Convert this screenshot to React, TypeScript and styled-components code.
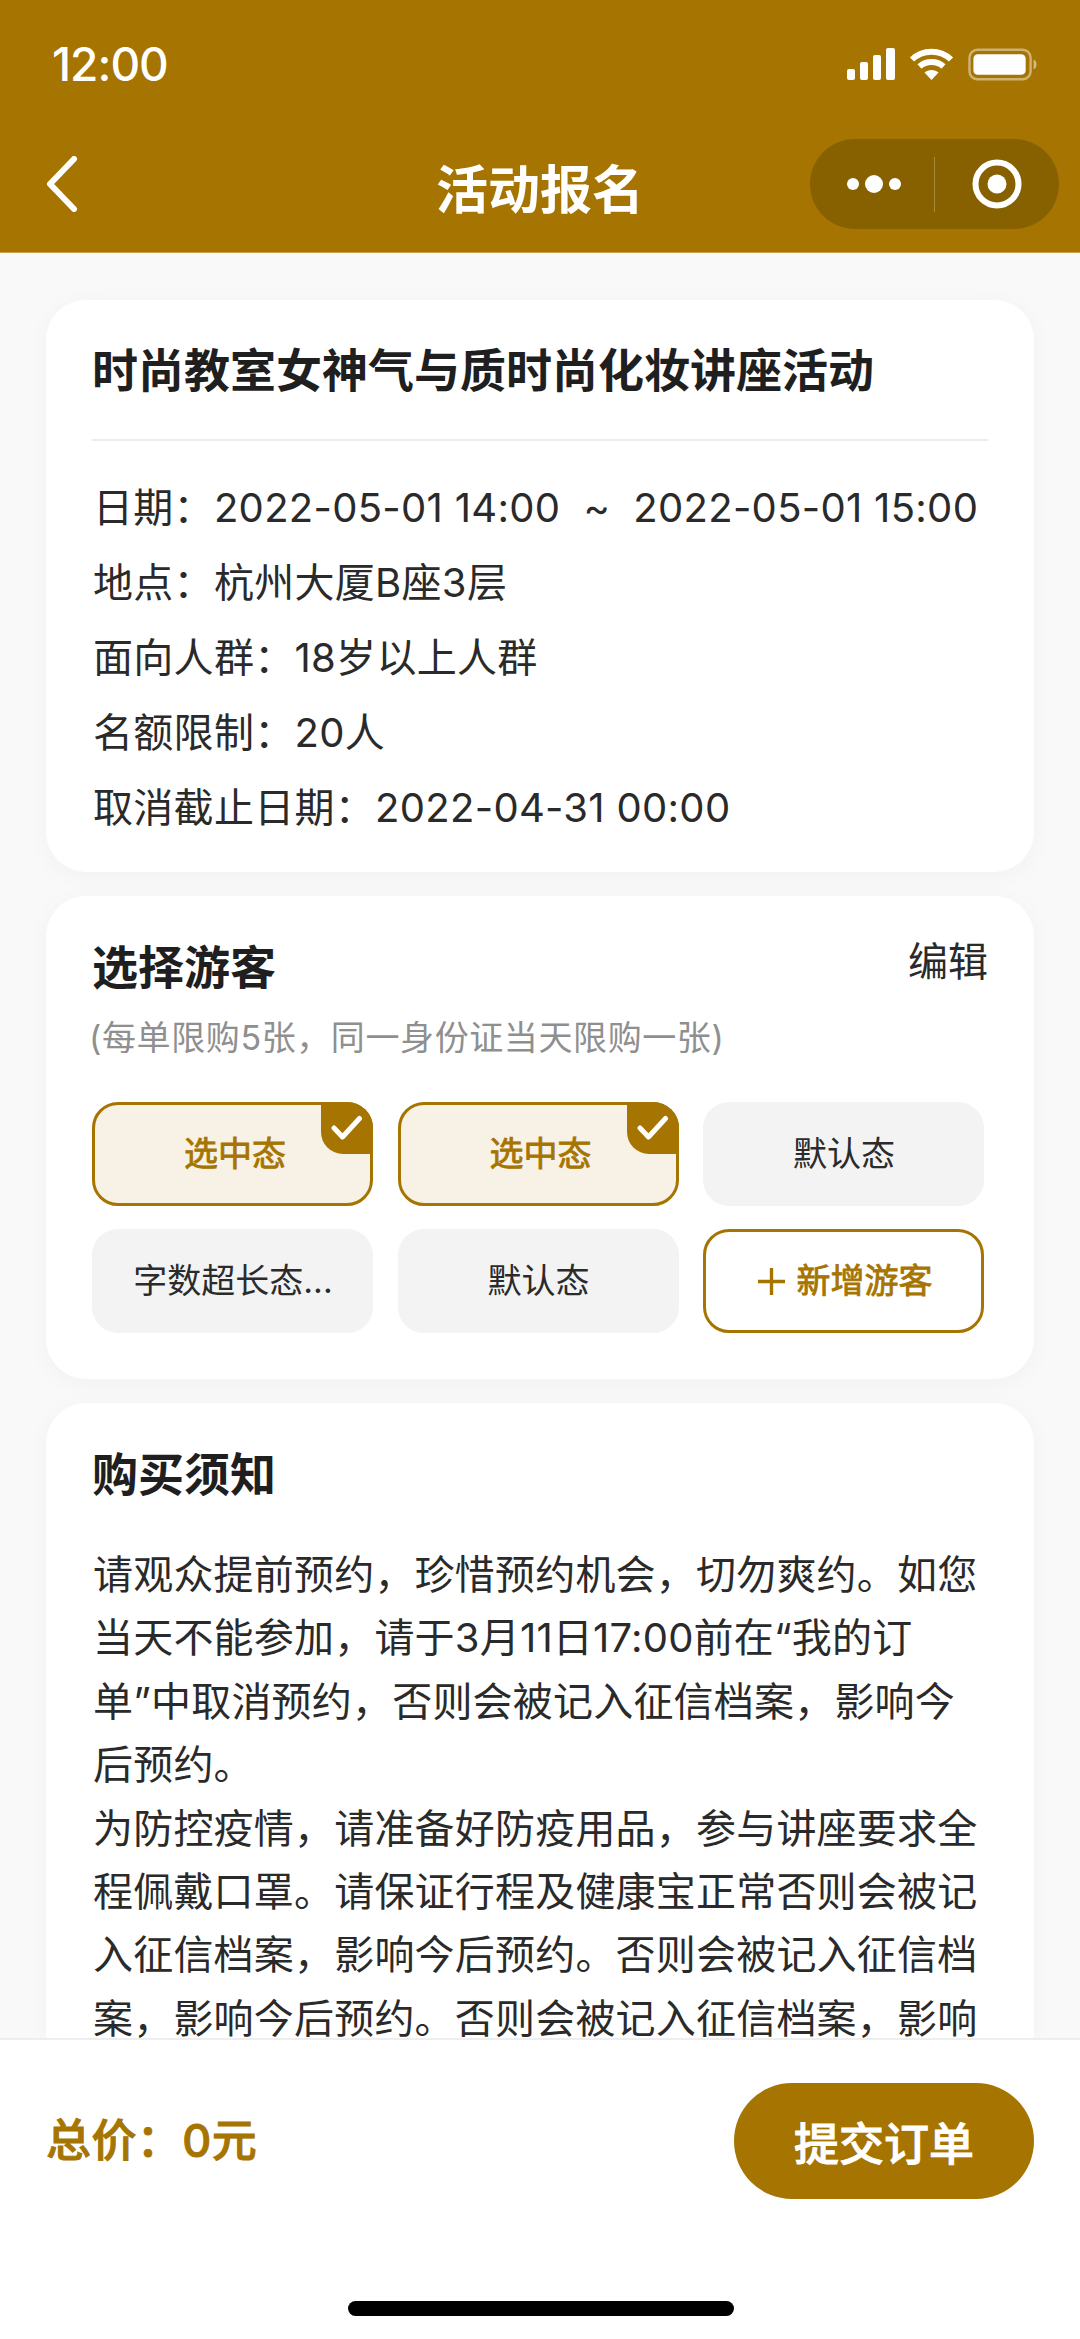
import React from 'react';
import styled, { createGlobalStyle } from 'styled-components';

const Global = createGlobalStyle`
  html, body { margin: 0; padding: 0; background: #f9f9f9; }
  * { box-sizing: border-box; }
`;
const gold = '#a67400';
const Page = styled.div`
  width: 1080px; height: 2339px; display: flex; flex-direction: column; overflow: hidden;
  background: #f9f9f9; color: #1f1f1f;
  font-family: "Inter", "Noto Sans CJK SC", sans-serif;
`;
const Header = styled.header`
  height: 253px; flex: none; background: ${gold}; color: #fff; display: flex; flex-direction: column;
  border-bottom: 1px solid #c9a445;
`;
const StatusBar = styled.div`
  height: 128px; padding: 40px 43px 0 52px; display: flex; justify-content: space-between; align-items: flex-start;
`;
const Time = styled.span`
  font-size: 46px; line-height: 48px; font-weight: 500; letter-spacing: -1px;
`;
const StatusIcons = styled.div`
  display: flex; align-items: center; gap: 14px; height: 44px; margin-top: 2px;
`;
const NavBar = styled.div`
  display: flex; align-items: center; justify-content: space-between; height: 90px; margin-top: 11px; padding: 0 21px 0 46px; position: relative;
`;
const Title = styled.h1`
  position: absolute; left: 0; right: 0; top: 3px; margin: 0; text-align: center;
  font-size: 52px; line-height: 90px; font-weight: 700; font-family: "Noto Sans CJK SC", serif;
`;
const Capsule = styled.div`
  width: 249px; height: 90px; border-radius: 45px; background: #876000; display: flex; align-items: center; padding-left: 37px;
`;
const CapsuleDivider = styled.span`
  width: 1px; height: 55px; background: #a78a3f; margin: 0 37px 0 33px;
`;
const Content = styled.main`
  flex: 1; min-height: 0; overflow: hidden; padding: 47px 46px 0; display: flex; flex-direction: column; gap: 24px;
`;
const Card = styled.section<{ $fill?: boolean }>`
  flex: ${p => (p.$fill ? '1' : 'none')}; min-height: 0; background: #fff; padding: 0 46px; box-shadow: 0 4px 24px rgba(0,0,0,.035);
  border-radius: ${p => (p.$fill ? '40px 40px 0 0' : '40px')};
`;
const EventTitle = styled.h2`
  margin: 0; padding-top: 38px; height: 141px; border-bottom: 2px solid #ececec; font-size: 46px; line-height: 64px; font-weight: 700; color: #1f1f1f; white-space: nowrap;
`;
const InfoList = styled.div`
  padding: 29px 0 27px 1px; display: flex; flex-direction: column;
`;
const InfoRow = styled.div`
  font-size: 40px; line-height: 75px; white-space: pre; color: #2a2a2a; letter-spacing: .3px;
`;
const SectionHead = styled.div`
  display: flex; justify-content: space-between; align-items: flex-start; padding-top: 40px;
`;
const SectionTitle = styled.h3`
  margin: 0; font-size: 46px; line-height: 62px; font-weight: 700; color: #1f1f1f;
`;
const EditLink = styled.span`
  font-size: 40px; line-height: 52px; color: #2a2a2a;
`;
const Note = styled.p`
  margin: 18px 0 0 -3px; font-size: 34px; line-height: 44px; color: #8f8f8f; white-space: nowrap; letter-spacing: .6px;
`;
const ChipGrid = styled.div`
  display: grid; grid-template-columns: repeat(3, 281px); column-gap: 24.5px; row-gap: 23px; margin: 42px 0 46px;
`;
const Chip = styled.div<{ $variant?: 'selected' | 'default' | 'add' }>`
  position: relative; height: 104px; border-radius: 26px; display: flex; align-items: center; justify-content: center;
  font-size: 34px; white-space: nowrap; line-height: 46px;
  padding-left: ${p => (p.$variant === 'selected' ? '5px' : '1px')};
  color: ${p => (p.$variant === 'default' ? '#2b2b2b' : gold)};
  background: ${p => (p.$variant === 'selected' ? '#f8f1e5' : p.$variant === 'add' ? '#fff' : '#f3f3f3')};
  border: ${p => (p.$variant === 'default' ? 'none' : `3px solid ${gold}`)};
  -webkit-text-stroke: ${p => (p.$variant === 'default' ? '0' : `.8px ${gold}`)};
`;
const CheckCorner = styled.span`
  position: absolute; top: -3px; right: -3px; width: 52px; height: 52px; background: ${gold};
  border-bottom-left-radius: 22px; border-top-right-radius: 26px;
  display: flex; align-items: center; justify-content: center;
`;
const AddLabel = styled.span`
  display: flex; align-items: center; gap: 12px; padding-left: 2px;
`;
const NoticeTitle = styled(SectionTitle)`
  padding-top: 40px;
`;
const NoticeBody = styled.p`
  margin: 38px 0 0 1px; font-size: 40px; line-height: 63.4px; color: #2a2a2a; letter-spacing: .2px;
`;
const Footer = styled.footer`
  position: relative; flex: none; height: 301px; background: #fff; border-top: 2px solid #eee; padding: 43px 46px 0 46px;
  display: flex; align-items: flex-start; justify-content: space-between;
`;
const Total = styled.span`
  font-size: 45px; line-height: 116px; font-weight: 500; color: ${gold}; letter-spacing: .4px; -webkit-text-stroke: .9px ${gold};
`;
const Submit = styled.button`
  width: 300px; height: 116px; border: 0; border-radius: 58px; background: ${gold}; color: #fff; font: inherit; font-size: 45px; font-weight: 500; padding: 0; -webkit-text-stroke: .9px #fff;
`;
const HomeBar = styled.span`
  position: absolute; left: 348px; bottom: 23px; width: 386px; height: 15px; border-radius: 8px; background: #000;
`;

const Signal = () => (
  <svg width="48" height="32" viewBox="0 0 48 32" fill="#fff">
    <rect x="0" y="21" width="8" height="11" rx="2" />
    <rect x="13" y="14" width="8" height="18" rx="2" />
    <rect x="26" y="7" width="8" height="25" rx="2" />
    <rect x="39" y="0" width="9" height="32" rx="2" />
  </svg>
);
const Wifi = () => (
  <svg width="45" height="32" viewBox="0 0 45 32" fill="none" stroke="#fff" strokeWidth="6">
    <path d="M3 11.5C13.5 1 31.5 1 42 11.5" />
    <path d="M10.5 18.5C17 12.5 28 12.5 34.5 18.5" />
    <path d="M22.5 32L15.5 24.5C19 21 26 21 29.5 24.5Z" fill="#fff" stroke="none" />
  </svg>
);
const Battery = () => (
  <svg width="69" height="33" viewBox="0 0 70 33" fill="none">
    <rect x="1.5" y="1.5" width="62" height="30" rx="8" stroke="#fff" strokeOpacity=".45" strokeWidth="2.5" />
    <rect x="5.5" y="6" width="53" height="21" rx="4.5" fill="#fff" />
    <path d="M66.5 11.5C69 12.5 69.5 14.5 69.5 16.5S69 20.5 66.5 21.5Z" fill="#fff" fillOpacity=".5" />
  </svg>
);
const Back = () => (
  <svg width="32" height="56" viewBox="0 0 32 56" fill="none" stroke="#fff" strokeWidth="6" strokeLinecap="round" strokeLinejoin="round">
    <path d="M28 3L4 28L28 53" />
  </svg>
);
const Dots = () => (
  <svg width="54" height="20" viewBox="0 0 54 20" fill="#fff">
    <circle cx="6" cy="10" r="6" />
    <circle cx="27" cy="10" r="9" />
    <circle cx="48" cy="10" r="6" />
  </svg>
);
const Target = () => (
  <svg width="50" height="50" viewBox="0 0 50 50" fill="none">
    <circle cx="25" cy="25" r="21.5" stroke="#fff" strokeWidth="6" />
    <circle cx="25" cy="25" r="9.5" fill="#fff" />
  </svg>
);
const Check = () => (
  <svg width="32" height="26" viewBox="0 0 32 26" fill="none" stroke="#fff" strokeWidth="5" strokeLinecap="round" strokeLinejoin="round">
    <path d="M3 13L11.5 22L28.5 3.5" />
  </svg>
);
const Plus = () => (
  <svg width="27" height="27" viewBox="0 0 28 28" fill="none" stroke={gold} strokeWidth="3.5">
    <path d="M14 0V28M0 14H28" />
  </svg>
);

const info = [
  '日期：2022-05-01 14:00  ~  2022-05-01 15:00',
  '地点：杭州大厦B座3层',
  '面向人群：18岁以上人群',
  '名额限制：20人',
  '取消截止日期：2022-04-31 00:00',
];

export default function App() {
  return (
    <Page>
      <Global />
      <Header>
        <StatusBar>
          <Time>12:00</Time>
          <StatusIcons><Signal /><Wifi /><Battery /></StatusIcons>
        </StatusBar>
        <NavBar>
          <Title>活动报名</Title>
          <Back />
          <Capsule><Dots /><CapsuleDivider /><Target /></Capsule>
        </NavBar>
      </Header>
      <Content>
        <Card>
          <EventTitle>时尚教室女神气与质时尚化妆讲座活动</EventTitle>
          <InfoList>
            {info.map(t => <InfoRow key={t}>{t}</InfoRow>)}
          </InfoList>
        </Card>
        <Card>
          <SectionHead>
            <SectionTitle>选择游客</SectionTitle>
            <EditLink>编辑</EditLink>
          </SectionHead>
          <Note>(每单限购5张，同一身份证当天限购一张)</Note>
          <ChipGrid>
            <Chip $variant="selected">选中态<CheckCorner><Check /></CheckCorner></Chip>
            <Chip $variant="selected">选中态<CheckCorner><Check /></CheckCorner></Chip>
            <Chip $variant="default">默认态</Chip>
            <Chip $variant="default">字数超长态...</Chip>
            <Chip $variant="default">默认态</Chip>
            <Chip $variant="add"><AddLabel><Plus />新增游客</AddLabel></Chip>
          </ChipGrid>
        </Card>
        <Card $fill>
          <NoticeTitle>购买须知</NoticeTitle>
          <NoticeBody>
            请观众提前预约，珍惜预约机会，切勿爽约。如您当天不能参加，请于3月11日17:00前在“我的订单”中取消预约，否则会被记入征信档案，影响今后预约。
            <br />
            为防控疫情，请准备好防疫用品，参与讲座要求全程佩戴口罩。请保证行程及健康宝正常否则会被记入征信档案，影响今后预约。否则会被记入征信档案，影响今后预约。否则会被记入征信档案，影响
          </NoticeBody>
        </Card>
      </Content>
      <Footer>
        <Total>总价：0元</Total>
        <Submit>提交订单</Submit>
        <HomeBar />
      </Footer>
    </Page>
  );
}
